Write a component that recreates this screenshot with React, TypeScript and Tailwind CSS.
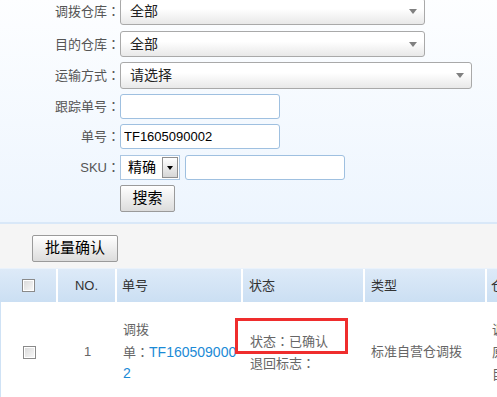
const C = () => <span className="font-['Noto_Sans_CJK_JP']">：</span>

const Select = ({ w, text }: { w: string; text: string }) => (
  <div
    className={`${w} h-full flex items-center justify-between rounded-[3px] border border-[#a9a9a9] bg-linear-to-b from-white from-40% to-[#e8e8e8] pl-[9px] pr-[7px] text-[14px] text-[#222]`}
  >
    <span>{text}</span>
    <span className="w-0 h-0 border-l-[4px] border-r-[4px] border-t-[5px] border-l-transparent border-r-transparent border-t-[#808080]" />
  </div>
)

const Row = ({ label, cls, children }: { label: string; cls: string; children: React.ReactNode }) => (
  <div className={`flex items-center ${cls}`}>
    <div className="w-[120px] text-right text-[13px] text-[#555]">
      {label}
      {label && <C />}
    </div>
    <div className="h-full flex items-center gap-[5px]">{children}</div>
  </div>
)

const Check = () => (
  <span className="block w-[13px] h-[13px] border border-[#8a8a8a] bg-linear-to-br from-[#d8d8d8] to-[#fafafa] shadow-[inset_0_0_0_1px_#fff]" />
)

const Btn = ({ text, w }: { text: string; w: string }) => (
  <button
    className={`${w} h-full rounded-[2px] border border-[#9a9a9a] bg-linear-to-b from-white to-[#dcdcdc] text-[15px] text-black`}
  >
    {text}
  </button>
)

export default function App() {
  return (
    <div className="relative w-[497px] h-[397px] overflow-hidden bg-white font-['Liberation_Sans','Noto_Sans_CJK_SC',sans-serif]">
      {/* filters */}
      <div className="bg-linear-to-b from-[#fdfeff] to-[#edf5fe] border-b-2 border-[#d9e8f8] pb-[10px]">
        <Row label="调拨仓库" cls="-mt-[2px] h-[27px]">
          <Select w="w-[305px]" text="全部" />
        </Row>
        <Row label="目的仓库" cls="mt-[6px] h-[26px]">
          <Select w="w-[305px]" text="全部" />
        </Row>
        <Row label="运输方式" cls="mt-[5px] h-[27px]">
          <Select w="w-[352px]" text="请选择" />
        </Row>
        <Row label="跟踪单号" cls="mt-[5px] h-[25px]">
          <input className="w-[160px] h-full rounded-[3px] border border-[#9fc0e0] bg-white outline-none" />
        </Row>
        <Row label="单号" cls="mt-[5px] h-[25px]">
          <input
            defaultValue="TF1605090002"
            className="w-[160px] h-full rounded-[3px] border border-[#9fc0e0] bg-white px-[3px] text-[13px] text-black outline-none"
          />
        </Row>
        <Row label="SKU" cls="mt-[6px] h-[25px]">
          <div className="w-[60px] h-full flex items-center border border-[#aac6e2] bg-white pl-[7px] pr-[1px]">
            <span className="flex-1 text-[14px] text-black">精确</span>
            <span className="w-[16px] h-[21px] flex items-center justify-center border border-[#8f8f8f] bg-linear-to-b from-white to-[#d6d6d6]">
              <span className="w-0 h-0 border-l-[3px] border-r-[3px] border-t-[4px] border-l-transparent border-r-transparent border-t-black" />
            </span>
          </div>
          <input className="w-[160px] h-full rounded-[3px] border border-[#9fc0e0] bg-white outline-none" />
        </Row>
        <Row label="" cls="mt-[5px] h-[27px]">
          <Btn text="搜索" w="w-[55px]" />
        </Row>
      </div>

      {/* toolbar */}
      <div className="h-[44px] bg-[#f5f5f5] pt-[11px] pb-[6px] pl-[32px]">
        <Btn text="批量确认" w="w-[86px]" />
      </div>

      {/* table */}
      <div className="w-[640px] border-t border-[#eaf2fb]">
        <div className="flex h-[33px] items-center bg-linear-to-b from-[#ddeaf8] to-[#cbdff3] text-[13px] text-[#333]">
          <div className="w-[58px] h-full flex items-center justify-center border-r-2 border-white">
            <Check />
          </div>
          <div className="w-[59px] h-full flex items-center justify-center border-r-2 border-white">NO.</div>
          <div className="w-[126px] h-full flex items-center pl-[5px] border-r-2 border-white">单号</div>
          <div className="w-[122px] h-full flex items-center pl-[6px] border-r-2 border-white">状态</div>
          <div className="w-[122px] h-full flex items-center pl-[6px] border-r-2 border-white">类型</div>
          <div className="flex-1 h-full flex items-center pl-[4px]">仓库</div>
        </div>
        <div className="flex h-[100px] items-center border-l border-[#cfe2f5] text-[13px] text-[#666] leading-[21.5px]">
          <div className="w-[57px] flex justify-center">
            <Check />
          </div>
          <div className="w-[59px] text-center text-[#666]">1</div>
          <div className="w-[126px] pl-[6px]">
            调拨
            <br />
            单<C />
            <span className="text-[#1b8ad6] text-[14px]">TF160509000</span>
            <br />
            <span className="text-[#1b8ad6] text-[14px]">2</span>
          </div>
          <div className="w-[122px] pl-[7px]">
            状态<C />已确认
            <br />
            退回标志<C />
          </div>
          <div className="w-[122px] pl-[6px]">标准自营仓调拨</div>
          <div className="flex-1 pl-[5px] whitespace-nowrap">
            调出仓<C />
            <br />
            原仓库<C />
            <br />
            目的仓<C />
          </div>
        </div>
      </div>

      {/* annotation */}
      <div className="absolute left-[235px] top-[318px] w-[113px] h-[36px] border-[3px] border-[#ef2d2d]" />
    </div>
  )
}
